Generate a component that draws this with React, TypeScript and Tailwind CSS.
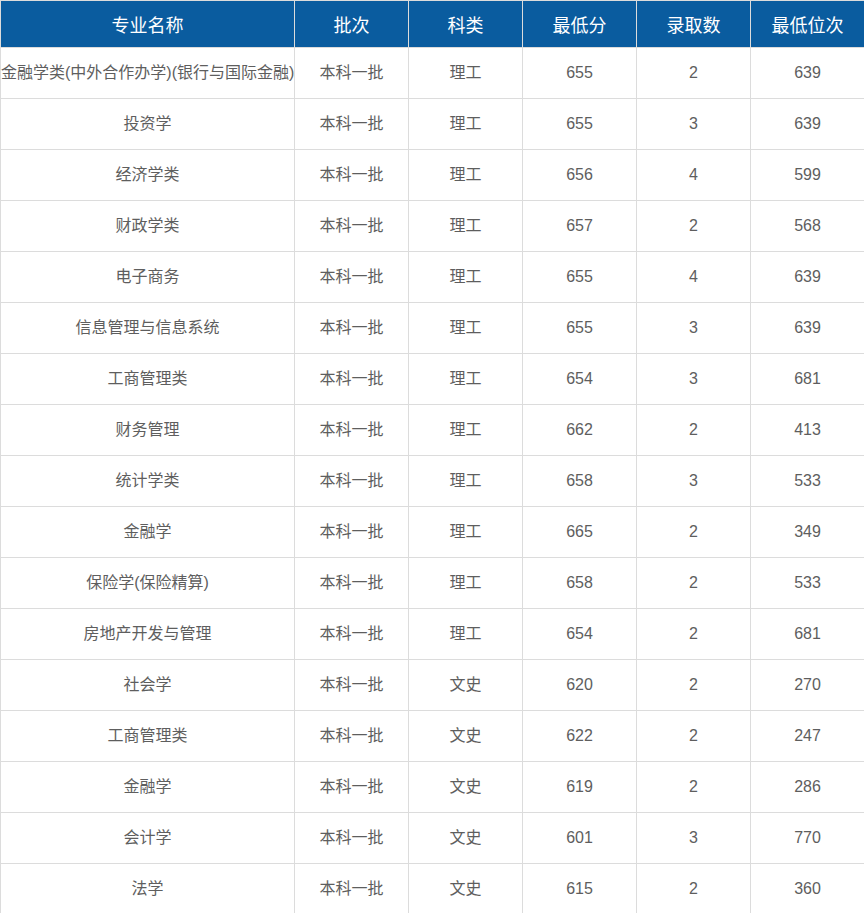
import React from 'react';

const rows: [string, string, string, string, string, string][] = [
    ['金融学类(中外合作办学)(银行与国际金融)', '本科一批', '理工', '655', '2', '639'],
    ['投资学', '本科一批', '理工', '655', '3', '639'],
    ['经济学类', '本科一批', '理工', '656', '4', '599'],
    ['财政学类', '本科一批', '理工', '657', '2', '568'],
    ['电子商务', '本科一批', '理工', '655', '4', '639'],
    ['信息管理与信息系统', '本科一批', '理工', '655', '3', '639'],
    ['工商管理类', '本科一批', '理工', '654', '3', '681'],
    ['财务管理', '本科一批', '理工', '662', '2', '413'],
    ['统计学类', '本科一批', '理工', '658', '3', '533'],
    ['金融学', '本科一批', '理工', '665', '2', '349'],
    ['保险学(保险精算)', '本科一批', '理工', '658', '2', '533'],
    ['房地产开发与管理', '本科一批', '理工', '654', '2', '681'],
    ['社会学', '本科一批', '文史', '620', '2', '270'],
    ['工商管理类', '本科一批', '文史', '622', '2', '247'],
    ['金融学', '本科一批', '文史', '619', '2', '286'],
    ['会计学', '本科一批', '文史', '601', '3', '770'],
    ['法学', '本科一批', '文史', '615', '2', '360'],
];

const headers = ['专业名称', '批次', '科类', '最低分', '录取数', '最低位次'];

export default function App() {
    return (
        <div className="w-[864px] bg-white font-['Liberation_Sans','Noto_Sans_CJK_SC',sans-serif]">
            <table className="w-[864px] table-fixed border-collapse">
                <colgroup>
                    <col className="w-[294px]" />
                    <col className="w-[114px]" />
                    <col className="w-[114px]" />
                    <col className="w-[114px]" />
                    <col className="w-[114px]" />
                    <col className="w-[114px]" />
                </colgroup>
                <thead>
                    <tr className="h-[47px] bg-[#0a5c9f]">
                        {headers.map((h) => (
                            <th
                                key={h}
                                className="border border-[#dcdcdc] p-0 text-center text-[18px] font-normal text-white font-['Noto_Sans_CJK_SC',sans-serif]"
                            >
                                {h}
                            </th>
                        ))}
                    </tr>
                </thead>
                <tbody>
                    {rows.map((r, i) => (
                        <tr key={i} className="h-[51px]">
                            {r.map((c, j) => (
                                <td
                                    key={j}
                                    className="whitespace-nowrap border border-[#dcdcdc] p-0 text-center text-[16px] text-[#5e5e5e]"
                                >
                                    {c}
                                </td>
                            ))}
                        </tr>
                    ))}
                </tbody>
            </table>
        </div>
    );
}
